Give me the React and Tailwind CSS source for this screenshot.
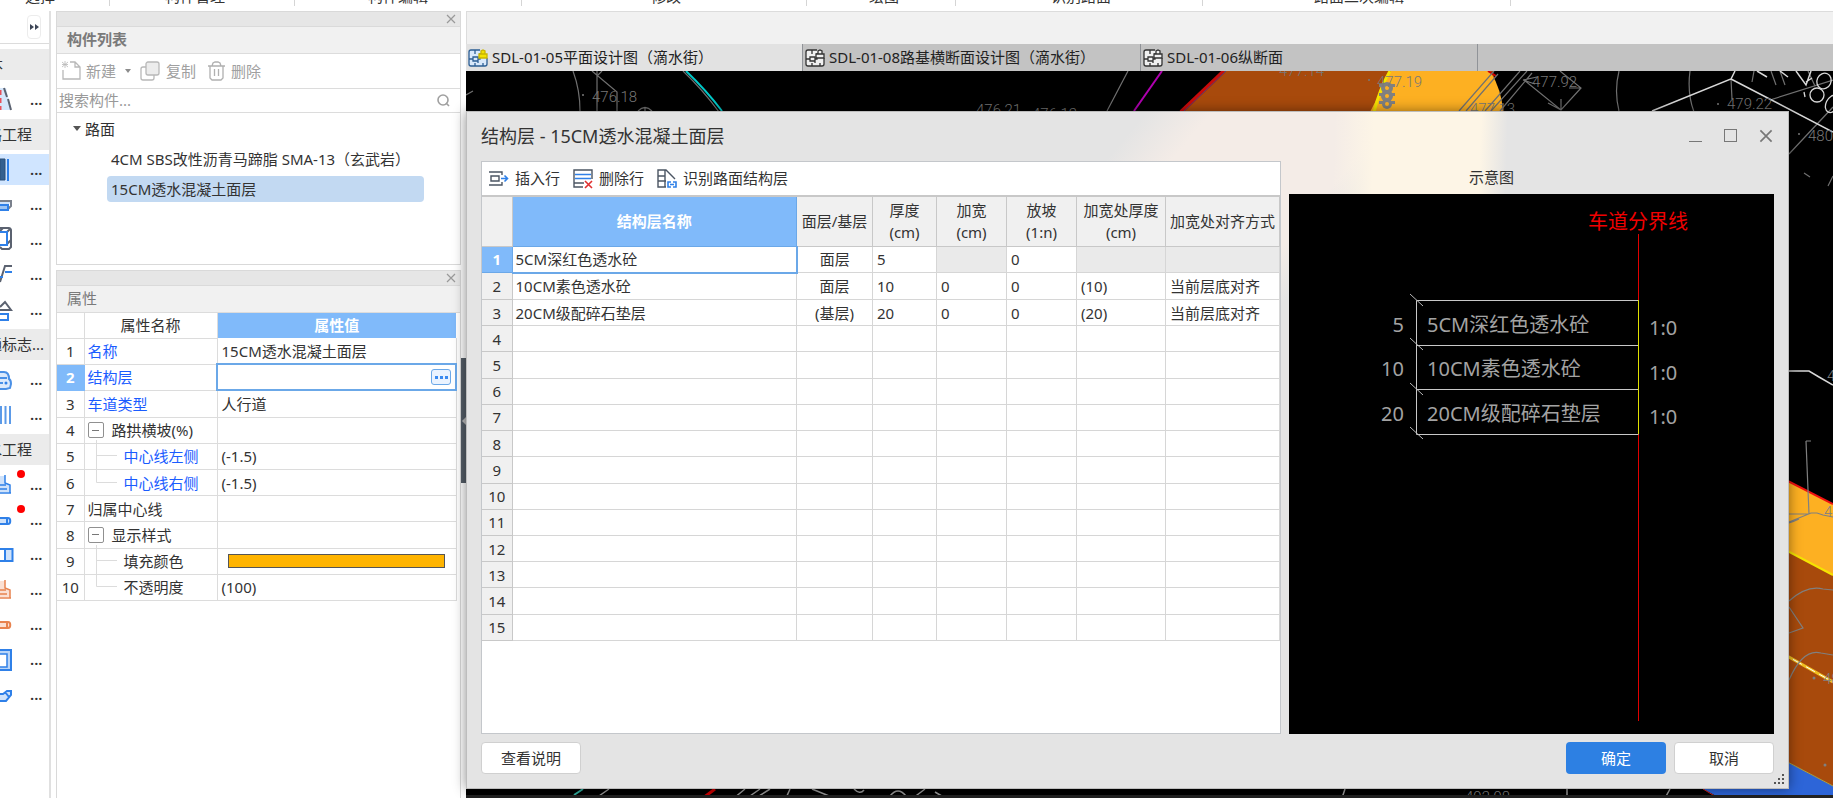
import React, { useState } from 'react';

const ribbonGroups = [
  { label: '选择', width: 'w-[110px] pl-[25px]' },
  { label: '构件管理', width: 'w-[185px] pl-[55px]' },
  { label: '构件编辑', width: 'w-[227px] pl-[73px]' },
  { label: '修改', width: 'w-[285px] pl-[129px]' },
  { label: '绘图', width: 'w-[149px] pl-[62px]' },
  { label: '识别路面', width: 'w-[247px] pl-[95px]' },
  { label: '路面二次编辑', width: 'w-[308px] pl-[111px]' },
];

// Sidebar entries: either a category title or a tool with its icon
const sidebarEntries = [
  { title: '文本', width: 'w-[3px]' },
  { name: '道路', icon: 'lane' },
  { title: '道路工程', width: 'w-8' },
  { name: '路面', icon: 'road', active: true },
  { name: '路缘石', icon: 'curb' },
  { name: '井', icon: 'box' },
  { name: '边坡', icon: 'slope' },
  { name: '挡墙', icon: 'wall' },
  { title: '交通标志...', width: 'w-[44px]' },
  { name: '车辆', icon: 'car' },
  { name: '标线', icon: 'lines' },
  { title: '排水工程', width: 'w-8' },
  { name: '雨水井', icon: 'wellBlue', dot: true },
  { name: '雨水管', icon: 'pipeBlue', dot: true },
  { name: '管沟', icon: 'trench' },
  { name: '污水井', icon: 'wellOrange' },
  { name: '污水管', icon: 'pipeOrange' },
  { name: '基坑', icon: 'pit' },
  { name: '弯头', icon: 'elbow' },
];

const sidebarIcons = {
  lane: (
    <>
      <path d="M0 6h6l5 22H0z" fill="#d5e6fb" />
      <path d="M0 8v5M0 16v5M0 24v4" stroke="#e8505b" strokeWidth="3" />
      <path d="M4 6l3 9M8 17l3 11" stroke="#5b6270" strokeWidth="2" />
    </>
  ),
  road: (
    <>
      <path d="M0 7h5v21H0z" fill="#34608f" stroke="#2b4f78" />
      <path d="M8 7v22" stroke="#2f80e8" strokeWidth="2" />
    </>
  ),
  curb: (
    <>
      <path d="M0 18l8 0 4-4H0z" fill="#cfe2fa" />
      <path d="M0 14h11v5l-4 4" stroke="#7a808c" strokeWidth="2" />
      <path d="M0 18h8v5H0" fill="#9cc4f5" stroke="#2f80e8" strokeWidth="2" />
    </>
  ),
  box: (
    <>
      <path d="M0 6h9l2 2v17l-2 2H2l-2-2M0 9l3-3M7 10l4-4M7 22l4-4" stroke="#5b6270" strokeWidth="2" />
      <path d="M0 10h7v13H0" fill="#fff" stroke="#2f80e8" strokeWidth="2" />
    </>
  ),
  slope: (
    <>
      <path d="M0 25l5-16h7" stroke="#5b6270" strokeWidth="2" />
      <path d="M5 15h7M0 20h3" stroke="#2f80e8" strokeWidth="2" />
    </>
  ),
  wall: (
    <>
      <path d="M0 15l5-5 6 8H0" stroke="#5b6270" strokeWidth="2" />
      <path d="M0 22h8v6H0" stroke="#2f80e8" strokeWidth="2" />
    </>
  ),
  car: (
    <>
      <path d="M0 10h4c4 0 5 3 5 7 2 1 2 3 2 5l-1 4-4 1H0M0 16h7" fill="#dbe9fb" stroke="#4a90e6" strokeWidth="2" />
      <circle cx="6" cy="21" r="1.5" fill="#2f80e8" />
      <path d="M0 21h3" stroke="#4a90e6" strokeWidth="2" />
    </>
  ),
  lines: <path d="M1 9v18M5.500 9v18M10 9v18" stroke="#5b9ae8" strokeWidth="2" />,
  wellBlue: (
    <>
      <path d="M0 9h5v7l5 3v6H0z" fill="#cfe2fa" />
      <path d="M5 8v8l5 2v8M0 26h11M0 18h6M0 22h7" stroke="#2f80e8" strokeWidth="1.500" />
    </>
  ),
  pipeBlue: (
    <path d="M0 16h8c3 0 3 6 0 6H0M7 16v6" fill="#cfe2fa" stroke="#2f80e8" strokeWidth="2" />
  ),
  trench: (
    <>
      <path d="M5 12h7v12H5z" fill="#cfe2fa" />
      <path d="M0 12h12.500v12H0M5 12v12" stroke="#2f80e8" strokeWidth="2" />
    </>
  ),
  wellOrange: (
    <>
      <path d="M0 9h5v7l5 3v6H0z" fill="#fbe0d3" />
      <path d="M5 8v8l5 2v8M0 26h11M0 18h6M0 22h7" stroke="#e8834f" strokeWidth="1.500" />
    </>
  ),
  pipeOrange: (
    <path d="M0 15h8c3 0 3 6 0 6H0M7 15v6" fill="#fbe0d3" stroke="#e8834f" strokeWidth="2" />
  ),
  pit: (
    <>
      <path d="M0 8h11v20H0" fill="#b9d5f8" stroke="#2f80e8" strokeWidth="2" />
      <path d="M0 12h7v13H0" fill="#fff" stroke="#2f80e8" strokeWidth="1.500" />
    </>
  ),
  elbow: (
    <path d="M0 17h3l4-3h4v4l-5 6H0M5 15l4 5" fill="#cfe2fa" stroke="#2f80e8" strokeWidth="2" />
  ),
};

const properties = [
  { name: '名称', value: '15CM透水混凝土面层', link: true },
  { name: '结构层', value: '', link: true, active: true },
  { name: '车道类型', value: '人行道', link: true },
  { name: '路拱横坡(%)', value: '', group: true },
  { name: '中心线左侧', value: '(-1.5)', link: true, child: true },
  { name: '中心线右侧', value: '(-1.5)', link: true, child: true, last: true },
  { name: '归属中心线', value: '' },
  { name: '显示样式', value: '', group: true },
  { name: '填充颜色', color: true, child: true },
  { name: '不透明度', value: '(100)', child: true, last: true },
];

const layers = [
  { name: '5CM深红色透水砼', kind: '面层', thick: '5', widen: null, slope: '0', widenThick: null, align: null },
  { name: '10CM素色透水砼', kind: '面层', thick: '10', widen: '0', slope: '0', widenThick: '(10)', align: '当前层底对齐' },
  { name: '20CM级配碎石垫层', kind: '(基层)', thick: '20', widen: '0', slope: '0', widenThick: '(20)', align: '当前层底对齐' },
];

const emptyRows = Array.from({ length: 12 }, (_, i) => i + 4);

const CloseMark = ({ className }) => (
  <svg className={className} viewBox="0 0 10 10" fill="none" stroke="currentColor" strokeWidth="1.2">
    <path d="M1 1l8 8M9 1l-8 8" />
  </svg>
);

const Ribbon = () => (
  <div className="flex h-[11px] shrink-0 overflow-hidden bg-white">
    {ribbonGroups.map((group) => (
      <div key={group.label} className={`relative h-[6px] shrink-0 border-r border-[#d5d5d5] ${group.width}`}>
        <span className="-mt-[14px] block h-5 leading-5 whitespace-nowrap">{group.label}</span>
      </div>
    ))}
  </div>
);

const Sidebar = () => (
  <nav className="flex w-[51px] shrink-0 flex-col overflow-hidden border-r-2 border-[#e0e0e0] bg-white">
    <div className="flex h-[33px] shrink-0 items-center justify-end border-b border-[#dcdcdc] pr-2">
      <button aria-label="展开" className="flex h-6 w-[14px] items-center justify-center rounded border border-[#ececec]">
        <svg className="h-2 w-[9px] shrink-0" viewBox="0 0 9 8" fill="#3d4657">
          <path d="M0 1l4 3-4 3zM5 1l4 3-4 3z" />
        </svg>
      </button>
    </div>
    <div className="pt-[3px]">
      {sidebarEntries.map((entry) =>
        entry.title ? (
          <div key={entry.title} className="py-[2px]">
            <div className="flex h-[31px] items-center bg-[#ebebeb]">
              <span className={`flex justify-end overflow-hidden whitespace-nowrap ${entry.width}`}>
                {entry.title}
              </span>
            </div>
          </div>
        ) : (
          <button
            key={entry.name}
            aria-label={entry.name}
            className="relative block h-[35px] w-full py-[2px] text-left"
          >
            <span className={`flex h-[31px] items-center ${entry.active ? 'bg-[#d0e5ff]' : ''}`}>
              <svg className="h-[35px] w-[14px] shrink-0" viewBox="0 0 14 35" fill="none">
                {sidebarIcons[entry.icon]}
              </svg>
              <span className="pl-4 font-semibold">...</span>
            </span>
            {entry.dot && <span className="absolute top-[3px] left-[17px] h-2 w-2 rounded-full bg-[#ff0000]" />}
          </button>
        )
      )}
    </div>
  </nav>
);

const PanelHeader = ({ title, bold }) => (
  <>
    <div className="flex h-[15px] shrink-0 items-center justify-end border-b border-[#dadada] bg-[#e6e6e6] pr-1 text-[#999]">
      <button aria-label={`关闭${title}`}>
        <CloseMark className="h-[10px] w-[10px]" />
      </button>
    </div>
    <h2 className={`flex h-[27px] shrink-0 items-center border-b border-[#dcdcdc] bg-[#f1f1f1] pb-[2px] pl-[10px] text-[#7a7a7a] ${bold ? 'font-semibold' : ''}`}>
      {title}
    </h2>
  </>
);

const ComponentList = () => {
  const [keyword, setKeyword] = useState('');

  return (
    <section className="flex h-[254px] shrink-0 flex-col border border-[#d9d9d9] bg-white">
      <PanelHeader title="构件列表" bold />
      <div className="flex h-[35px] shrink-0 items-center border-b border-[#dcdcdc] pl-[5px] text-[#a0a0a0]">
        <button className="flex items-center">
          <svg className="mr-1 h-5 w-5" viewBox="0 0 20 20" fill="none" stroke="#b8b8b8" strokeWidth="1.300">
            <path d="M1 9v9h17V6l-5-5H8M13 1v5h5" />
            <path d="M0 1l6 5M6 1l-6 5M3 0v7M0 3.500h6" strokeWidth=".8" />
          </svg>
          新建
          <svg className="mx-[9px] h-[5px] w-[6px]" viewBox="0 0 6 5" fill="#8c8c8c">
            <path d="M0 0h6l-3 4z" />
          </svg>
        </button>
        <button className="flex items-center">
          <svg className="mr-[6px] h-5 w-5" viewBox="0 0 20 20" fill="none" stroke="#b8b8b8" strokeWidth="1.300">
            <rect x="6" y="1" width="13" height="13" rx="2" fill="#ececec" />
            <path d="M6 6H3a2 2 0 0 0-2 2v9a2 2 0 0 0 2 2h9a2 2 0 0 0 2-2v-3" />
          </svg>
          复制
        </button>
        <button className="ml-3 flex items-center">
          <svg className="mr-[6px] h-5 w-[17px]" viewBox="0 0 17 20" fill="none" stroke="#b0b0b0" strokeWidth="1.300">
            <path d="M0 5h17M4 5l1-3 2-1h3l2 1 1 3M2 5v12l2 2h9l2-2V5M6.500 8v7M10.500 8v7" />
          </svg>
          删除
        </button>
      </div>
      <label className="flex h-6 shrink-0 items-center border-b border-[#dcdcdc] pr-[10px] pl-[2px]">
        <input
          className="min-w-0 flex-1 outline-none placeholder:text-[#999]"
          aria-label="搜索构件"
          placeholder="搜索构件..."
          value={keyword}
          onChange={(e) => setKeyword(e.target.value)}
        />
        <svg className="h-[13px] w-[13px]" viewBox="0 0 13 13" fill="none" stroke="#a0a0a0" strokeWidth="1.600">
          <circle cx="6" cy="6" r="5" />
          <path d="M9 9l3 3" />
        </svg>
      </label>
      <ul className="pt-px text-[#333]">
        <li>
          <div className="flex h-[30px] items-center pl-4">
            <svg className="mr-1 h-[6px] w-2" viewBox="0 0 8 6" fill="#555">
              <path d="M0 0h8l-4 5z" />
            </svg>
            路面
          </div>
          <ul className="pr-9 pl-[50px]">
            <li className="flex h-[30px] items-center pl-1 whitespace-nowrap">4CM SBS改性沥青马蹄脂 SMA-13（玄武岩）</li>
            <li className="mt-[2px] flex h-[26px] items-center rounded bg-[#c2d9f2] pl-1">15CM透水混凝土面层</li>
          </ul>
        </li>
      </ul>
    </section>
  );
};

const PropertyName = ({ item }) => {
  if (item.group) {
    return (
      <span className="flex items-center">
        <button aria-label={`折叠${item.name}`} className="mr-2 flex h-4 w-4 items-center justify-center rounded-[2px] border border-[#909090]">
          <span className="h-px w-[7px] bg-[#777]" />
        </button>
        {item.name}
      </span>
    );
  }
  if (item.child) {
    return (
      <span className="flex items-center">
        <svg className="-my-1 mr-[7px] ml-2 h-8 w-[21px]" viewBox="0 0 21 32" fill="none" stroke="#dcdcdc">
          <path d={item.last ? 'M.5 0v15.500H21' : 'M.5 0v32M.5 15.500H21'} />
        </svg>
        {item.name}
      </span>
    );
  }
  return item.name;
};

const PropertyPanel = () => (
  <section className="mt-[5px] flex min-h-0 flex-1 flex-col border border-b-0 border-[#d9d9d9] bg-white">
    <PanelHeader title="属性" />
    <table className="mr-[3px] h-[288px] table-fixed border-collapse text-[#333]">
      <colgroup>
        <col className="w-[27px]" />
        <col className="w-[133px]" />
        <col />
      </colgroup>
      <thead>
        <tr className="h-[25px]">
          <th className="border-r border-b border-[#dcdcdc] p-0" />
          <th className="border-r border-b border-[#dcdcdc] p-0 font-normal">属性名称</th>
          <th className="bg-[#80bafa] p-0 text-white">属性值</th>
        </tr>
      </thead>
      <tbody>
        {properties.map((item, i) => (
          <tr key={item.name}>
            <td className={`border-r border-b p-0 text-center leading-6 ${item.active ? 'border-[#80bafa] bg-[#80bafa] font-bold text-white' : 'border-[#dcdcdc]'}`}>
              {i + 1}
            </td>
            <td className={`border-r border-b border-[#dcdcdc] p-0 pl-[3px] leading-6 ${item.link ? 'text-[#1a5cff]' : ''}`}>
              <PropertyName item={item} />
            </td>
            <td className={`p-0 leading-6 ${item.active ? 'border-2 border-[#6ba8e8] pr-1' : 'border-r border-b border-[#dcdcdc] pl-1'}`}>
              {item.color && <button aria-label={item.name} className="ml-[6px] block h-[14px] w-[217px] border border-[#555] bg-[#ffb400]" />}
              {item.active && (
                <button aria-label="编辑结构层" className="ml-auto flex h-4 w-5 items-center justify-center gap-[2px] rounded-[3px] border border-[#6ba8e8] bg-[#eaf3ff]">
                  <span className="h-[3px] w-[3px] bg-[#3a8af0]" />
                  <span className="h-[3px] w-[3px] bg-[#3a8af0]" />
                  <span className="h-[3px] w-[3px] bg-[#3a8af0]" />
                </button>
              )}
              {item.value}
            </td>
          </tr>
        ))}
      </tbody>
    </table>
  </section>
);

const DrawingIcon = ({ locked }) => (
  <svg className="mr-1 h-[18px] w-5 shrink-0" viewBox="0 0 20 18" fill="none" stroke={locked ? '#2d5f94' : '#333'} strokeWidth="1.300">
    <path d="M12 1H3a2 2 0 0 0-2 2v12a2 2 0 0 0 2 2h14a2 2 0 0 0 2-2V9" fill={locked ? '#d9e9fb' : '#f0f0f0'} />
    <path d="M1 10h4M5 8h5v4H5zM7 1v4M10 10h2V4M10 12v2M7 14v3M15 17v-3" />
    <path d="M11 9V5h8v4zM13 5V2l2-1 2 1v3" fill={locked ? '#f2e200' : '#f0f0f0'} stroke={locked ? '#c9b400' : '#333'} />
  </svg>
);

const DrawingTabs = () => (
  <div role="tablist" className="flex h-[27px] shrink-0 bg-[#c3c3c3] text-[#222]">
    <button role="tab" aria-selected="true" className="flex w-[337px] items-center border-r border-[#909398] bg-[#e2e2e2] pl-[2px]">
      <DrawingIcon locked />
      SDL-01-05平面设计图（滴水街）
    </button>
    <button role="tab" aria-selected="false" className="flex w-[338px] items-center border-r border-[#909398] pl-[2px]">
      <DrawingIcon />
      SDL-01-08路基横断面设计图（滴水街）
    </button>
    <button role="tab" aria-selected="false" className="flex w-[337px] items-center border-r border-[#909398] pl-[2px]">
      <DrawingIcon />
      SDL-01-06纵断面
    </button>
  </div>
);

const CadDrawing = () => (
  <svg className="absolute inset-0 h-full w-full bg-black" viewBox="466 71 1367 727" preserveAspectRatio="xMinYMin slice" fill="none">
    <path d="M1223 71L1180 112H1500L1493 71z" fill="#a84a0c" />
    <path d="M1391 71L1370 112H1503Q1502 90 1490 71z" fill="#fdb022" />
    <path d="M1224 71L1181 112" stroke="#c80a0a" strokeWidth="4" />
    <path d="M1226 71L1183 112" stroke="#4a4a70" />
    <path d="M1390 71Q1380 88 1374 112" stroke="#f5e400" strokeWidth="3" />
    <path d="M1488 71L1496 76" stroke="#d00000" strokeWidth="2" />
    <g fill="#808080">
      <circle cx="1387" cy="88" r="6" />
      <circle cx="1387" cy="96" r="6" />
      <circle cx="1387" cy="104" r="5" />
      <path d="M1379 84h16v3h-16zM1379 93h16v3h-16zM1379 101h16v3h-16z" />
    </g>
    <g fill="#fdb022">
      <circle cx="1387" cy="88" r="2" />
      <circle cx="1387" cy="96" r="2" />
      <circle cx="1387" cy="104" r="2" />
    </g>
    <path d="M686 71Q706 90 722 111" stroke="#00c8c8" strokeWidth="2" />
    <path d="M1162 71L1134 111" stroke="#b000b0" strokeWidth="2" />
    <path
      d="M573 71Q580 90 580 111M597 71v40M592 71L617 92v19M602 71l-4 4M683 71Q703 90 719 112M638 111q7-7 14 0M645 107v5M466 95l7-4M1128 71L1107 111M1494 71L1459 111M1498 74L1466 111M1520 71L1485 111M1527 71L1491 111M1532 73L1500 111M1524 80L1561 110L1581 88L1560 71M1523 80l14-3M1523 80l12 4M1561 110v-11M1561 110l-13-7M1581 88l-12 0M1619 71q-5 20 0 40M1690 71q-3 22 4 41M1731 79l1 20M1754 71l-2 11M1771 71l5 14M1780 71l5 14M1833 107L1789 154M1833 80L1770 100M1808 71l7 15M1828 186l5-10M1804 173l6 4"
      stroke="#707070"
      strokeWidth="1.200"
    />
    <path
      d="M1652 111L1731 79L1735 71M1731 79L1833 132M1757 71l10 6M1780 71l8 6M1796 71l10 14 5-14M1806 82l6-4M1789 371h20l10 6 14 8"
      stroke="#d8d8d8"
      strokeWidth="1.500"
    />
    <g stroke="#d8d8d8" strokeWidth="1.300">
      <ellipse cx="1824" cy="81" rx="7" ry="8" transform="rotate(25 1824 81)" />
      <ellipse cx="1817" cy="95" rx="7" ry="7" />
      <ellipse cx="1832" cy="104" rx="6" ry="9" transform="rotate(25 1832 104)" />
      <path d="M1804 92l1 5" />
    </g>
    <g fill="#787878" fontFamily="Roboto, sans-serif" fontSize="15" fontWeight="300">
      <text x="592" y="102">476.18</text>
      <text x="976" y="115">476.21</text>
      <text x="1032" y="119">476.12</text>
      <text x="1279" y="76">477.14</text>
      <text x="1377" y="87">477.19</text>
      <text x="1470" y="114">477.13</text>
      <text x="1532" y="87">477.92</text>
      <text x="1727" y="109">479.22</text>
      <text x="1808" y="141">480.15</text>
      <circle cx="583" cy="95" r="1" />
      <circle cx="1369" cy="80" r="1" />
      <circle cx="1718" cy="104" r="1" />
      <circle cx="1799" cy="134" r="1" />
    </g>
    {/* roadway to the right of the dialog */}
    <path d="M1780 477L1833 504V575L1780 547z" fill="#fdb022" />
    <path d="M1780 547L1833 575V786L1780 758z" fill="#a84a0c" />
    <path d="M1703 789L1780 758L1833 786V798H1720z" fill="#2d65d8" />
    <path d="M1780 477L1833 504" stroke="#f01010" strokeWidth="2" />
    <path d="M1780 547L1833 575" stroke="#f5e400" strokeWidth="2" />
    <path d="M1780 652L1833 682" stroke="#f0c020" strokeWidth="3" />
    <path d="M1780 652L1833 682" stroke="#fff" strokeDasharray="10 5" />
    <path d="M1780 758L1833 786" stroke="#b0a040" />
    <path d="M1703 789L1718 798" stroke="#d02020" />
    <path
      d="M1806 441l3 73M1806 441h5M1789 522l22-9h6l6 2 10 2M1789 514h20M1789 523q6-2 10-4M1789 601q18-16 34-12l10 1M1789 607l14 21-14 5M1789 680q14-32 32-27l12 2"
      stroke="#808080"
      strokeWidth="1.200"
    />
    <g fill="#808080" fontFamily="Roboto, sans-serif" fontSize="15" fontWeight="300">
      <text x="1824" y="517">48</text>
      <text x="1827" y="381">4</text>
      <text x="1823" y="684">48</text>
      <circle cx="1814" cy="678" r="1.500" />
      <circle cx="1825" cy="765" r="1.500" />
      <text x="1465" y="802">492.98</text>
    </g>
    <path
      d="M609 789l-13 9M745 789l-11 9M760 789l-13 9M770 789l-14 9M790 789l-4 9M812 789l22 9M854 789q6 6 10 1M890 796q8-10 16 0M925 789l-12 9M935 792l10 6M1345 789l-3 9M1567 789v9M1670 789l-5 9"
      stroke="#9a9a9a"
      strokeWidth="1.500"
    />
    <path d="M715 789l-12 9" stroke="#d00000" strokeWidth="3" />
    <path d="M583 789l-9 6" stroke="#30b0a0" strokeWidth="2" />
    <path d="M466 796.500H1833" stroke="#222" strokeWidth="3" />
  </svg>
);

const th = 'border-r border-b border-[#c8c8c8] p-0 font-normal leading-[22px]';
const td = 'border-r border-b border-[#d6d6d6] p-0 leading-6';

const LayerTable = () => (
  <table className="h-[446px] w-full table-fixed border-collapse border-t-2 border-[#c8c8c8] text-[#333]">
    <colgroup>
      <col className="w-[30px]" />
      <col />
      <col className="w-[76px]" />
      <col className="w-[64px]" />
      <col className="w-[70px]" />
      <col className="w-[70px]" />
      <col className="w-[89px]" />
      <col className="w-[114px]" />
    </colgroup>
    <thead className="bg-[#f0f0f0]">
      <tr className="h-[50px]">
        <th className={th} />
        <th className="border border-[#6ba8e8] bg-[#80bafa] p-0 text-white">结构层名称</th>
        <th className={th}>面层/基层</th>
        <th className={th}>厚度<br />(cm)</th>
        <th className={th}>加宽<br />(cm)</th>
        <th className={th}>放坡<br />(1:n)</th>
        <th className={th}>加宽处厚度<br />(cm)</th>
        <th className={th}>加宽处对齐方式</th>
      </tr>
    </thead>
    <tbody>
      {layers.map((layer, i) => (
        <tr key={layer.name}>
          <td className={`border-r border-b p-0 text-center leading-6 ${i === 0 ? 'border-[#6ba8e8] bg-[#80bafa] font-bold text-white' : 'border-[#c8c8c8] bg-[#f0f0f0]'}`}>
            {i + 1}
          </td>
          <td className={i === 0 ? 'border-r-2 border-b-2 border-[#6ba8e8] p-0 pl-[3px] leading-6' : `${td} pl-[3px]`}>{layer.name}</td>
          <td className={`${td} text-center`}>{layer.kind}</td>
          <td className={`${td} pl-1`}>{layer.thick}</td>
          <td className={`${td} pl-1 ${layer.widen === null ? 'bg-[#eaeaea]' : ''}`}>{layer.widen}</td>
          <td className={`${td} pl-1`}>{layer.slope}</td>
          <td className={`${td} pl-1 ${layer.widenThick === null ? 'bg-[#eaeaea]' : ''}`}>{layer.widenThick}</td>
          <td className={`${td} pl-1 ${layer.align === null ? 'bg-[#eaeaea]' : ''}`}>{layer.align}</td>
        </tr>
      ))}
      {emptyRows.map((row) => (
        <tr key={row}>
          <td className="border-r border-b border-[#c8c8c8] bg-[#f0f0f0] p-0 text-center leading-6">{row}</td>
          <td className={td} />
          <td className={td} />
          <td className={td} />
          <td className={td} />
          <td className={td} />
          <td className={td} />
          <td className={td} />
        </tr>
      ))}
    </tbody>
  </table>
);

// Cross section of the layers next to the lane boundary
const LayerPreview = () => (
  <svg className="min-h-0 w-full flex-1 bg-black" viewBox="0 0 485 540" fill="none">
    <path d="M349.500 40V527" stroke="#e00000" />
    <path d="M349.500 106.500H127.500V240.500H349.500M127.500 151.500H349.500M127.500 195.500H349.500" stroke="#c8c8c8" />
    <path d="M121 100l13 12M121 144l13 12M121 189l13 12M121 233l13 12" stroke="#b8b8b8" />
    <path d="M349.500 106V240" stroke="#e0e000" />
    <g fontSize="20" fill="#a3a3a3">
      <text x="115" y="138" textAnchor="end">5</text>
      <text x="115" y="182" textAnchor="end">10</text>
      <text x="115" y="227" textAnchor="end">20</text>
      <text x="138" y="138">5CM深红色透水砼</text>
      <text x="138" y="182">10CM素色透水砼</text>
      <text x="138" y="227">20CM级配碎石垫层</text>
      <text x="360" y="141">1:0</text>
      <text x="360" y="186">1:0</text>
      <text x="360" y="230">1:0</text>
    </g>
    <text x="299" y="35" fontSize="20" fill="#f00000">车道分界线</text>
  </svg>
);

const StructureDialog = () => (
  <div
    role="dialog"
    aria-label="结构层"
    className="absolute top-10 right-11 bottom-[9px] left-0 flex flex-col border border-[#bdbdbd] bg-[#e4e4e4] bg-[linear-gradient(92deg,transparent_65%,#fdf5e6_68%,#fdf5e6_76%,transparent_78%),linear-gradient(130deg,transparent_41%,#f4ece7_45%,#f4ece7_56%,transparent_59%)] bg-[length:100%_400px] bg-no-repeat px-[14px] shadow-[0_0_12px_rgba(0,0,0,0.45)]"
  >
    <div className="flex h-[49px] shrink-0 items-center justify-between pr-px pb-[2px] text-[#333]">
      <h1 className="text-lg">结构层 - 15CM透水混凝土面层</h1>
      <div className="flex items-center gap-[22px] text-[#777]">
        <button aria-label="最小化" className="h-[13px] w-[13px] border-b border-[#777]" />
        <button aria-label="最大化" className="h-[13px] w-[13px] border border-[#777]" />
        <button aria-label="关闭">
          <CloseMark className="h-[14px] w-[14px]" />
        </button>
      </div>
    </div>
    <div className="flex min-h-0 flex-1 gap-2">
      <div className="flex min-w-0 flex-1 flex-col border border-[#c4c7cb] bg-white">
        <div className="flex h-[33px] shrink-0 items-center pl-[7px] text-[#333]">
          <button className="flex items-center">
            <svg className="mr-[6px] h-[18px] w-5" viewBox="0 0 20 18" fill="none" stroke="#4b5563" strokeWidth="1.400">
              <path d="M0 2h13v3M0 15h13v-3M2 6h8v5H2z" />
              <path d="M12 8.500h6M15.500 5.500l3 3-3 3" stroke="#2f80e8" strokeWidth="1.600" />
            </svg>
            插入行
          </button>
          <button className="ml-[13px] flex items-center">
            <svg className="mr-[6px] h-5 w-5" viewBox="0 0 20 20" fill="none" stroke="#4b5563" strokeWidth="1.400">
              <path d="M10 18H1V1h18v9M1 14h10" />
              <path d="M2 5.500h16M2 9.500h16" stroke="#2f80e8" strokeWidth="1.600" />
              <path d="M12 12l7 7M19 12l-7 7" stroke="#e03030" strokeWidth="1.600" />
            </svg>
            删除行
          </button>
          <button className="ml-[13px] flex items-center">
            <svg className="mr-[6px] h-5 w-5" viewBox="0 0 20 20" fill="none" stroke="#4b5563" strokeWidth="1.400">
              <path d="M9 18H1V1h8l9 9M1 7h7M1 12h8M8 1v17" />
              <path d="M14 13h-3v5h3M16 13h3v5h-3M13 15.500h4" stroke="#2f80e8" strokeWidth="1.600" />
            </svg>
            识别路面结构层
          </button>
        </div>
        <LayerTable />
      </div>
      <div className="flex w-[485px] shrink-0 flex-col">
        <div className="flex h-[33px] shrink-0 items-center justify-center pr-20 text-[#333]">示意图</div>
        <LayerPreview />
      </div>
    </div>
    <div className="flex shrink-0 items-center gap-2 pt-2 pb-[14px] text-[#333]">
      <button className="h-8 w-[100px] rounded border border-[#d0d0d0] bg-white">查看说明</button>
      <button className="ml-auto h-8 w-[100px] rounded bg-[#2d80e3] text-white">确定</button>
      <button className="h-8 w-[100px] rounded border border-[#d0d0d0] bg-white">取消</button>
    </div>
    <svg className="absolute right-1 bottom-1 h-[10px] w-[10px]" viewBox="0 0 10 10" fill="#555">
      <path d="M8 0h2v2H8zM8 4h2v2H8zM8 8h2v2H8zM4 4h2v2H4zM4 8h2v2H4zM0 8h2v2H0z" />
    </svg>
  </div>
);

const App = () => (
  <div className="flex h-screen flex-col overflow-hidden bg-white font-['Noto_Sans','Noto_Sans_CJK_SC',sans-serif] text-[15px] text-[#333]">
    <Ribbon />
    <div className="flex min-h-0 flex-1">
      <Sidebar />
      <aside className="ml-[5px] flex w-[405px] shrink-0 flex-col">
        <ComponentList />
        <PropertyPanel />
      </aside>
      <div className="flex w-[5px] shrink-0 flex-col justify-center pt-8">
        <button aria-label="收起面板" className="flex h-[125px] items-center bg-[#555e68]">
          <svg className="h-2 w-[5px]" viewBox="0 0 5 8" fill="#bbb">
            <path d="M5 0v8L1 4z" />
          </svg>
        </button>
      </div>
      <main className="flex min-w-0 flex-1 flex-col">
        <div className="h-[33px] shrink-0 border-t border-l border-[#dcdcdc] bg-[#f1f1f1]" />
        <DrawingTabs />
        <div className="relative min-h-0 flex-1">
          <CadDrawing />
          <StructureDialog />
        </div>
      </main>
    </div>
  </div>
);

export default App;
